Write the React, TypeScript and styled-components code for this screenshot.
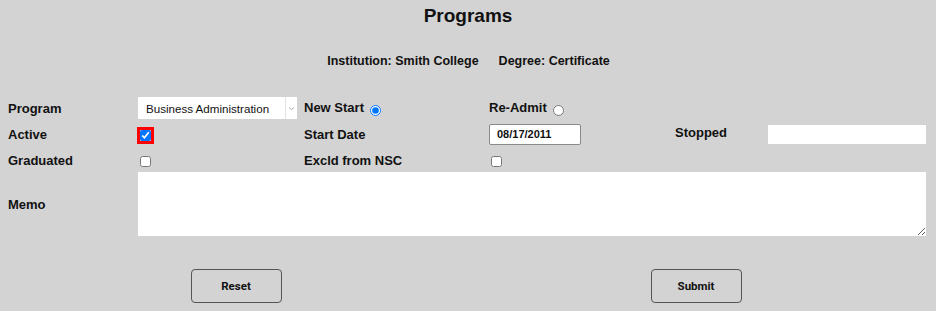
import React from 'react';
import styled, { createGlobalStyle } from 'styled-components';

const GlobalStyle = createGlobalStyle`
  html, body {
    margin: 0;
    padding: 0;
    background: #d3d3d3;
  }
  body {
    font-family: "Liberation Sans", Arial, sans-serif;
    color: #111;
  }
`;

const Page = styled.div`
  width: 936px;
  height: 311px;
  box-sizing: border-box;
  padding: 4px 10px 0 8px;
  background: #d3d3d3;
`;

const Title = styled.h1`
  margin: 0;
  text-align: center;
  font-size: 19px;
  line-height: 24px;
  font-weight: 700;
  padding-left: 2px;
`;

const SubTitle = styled.div`
  margin-top: 25px;
  display: flex;
  justify-content: center;
  gap: 20px;
  font-size: 12.5px;
  line-height: 16px;
  font-weight: 700;
  padding-left: 3px;
`;

const FormGrid = styled.div`
  margin-top: 28px;
  display: grid;
  grid-template-columns: 130px 166px 185px 186px 93px 158px;
  grid-template-rows: 22px 28px 22px 64px;
  row-gap: 1px;
  align-items: center;
`;

const Label = styled.label<{ $raise?: number }>`
  font-size: 13px;
  font-weight: 700;
  white-space: nowrap;
  position: relative;
  top: ${(p) => (p.$raise ? -p.$raise : 0)}px;
`;

const SelectBox = styled.div`
  display: flex;
  width: 159px;
  height: 22px;
  background: #fff;
`;

const NativeSelect = styled.select`
  appearance: none;
  flex: 1;
  min-width: 0;
  border: none;
  outline: none;
  background: transparent;
  padding: 0 0 0 8px;
  margin: 0;
  font-family: "Liberation Sans", Arial, sans-serif;
  font-size: 11.6px;
  color: #111;
`;

const SelectArrow = styled.div`
  width: 11px;
  border-left: 1px solid #e2e2e2;
  display: flex;
  align-items: center;
  justify-content: center;
`;

const Radio = styled.input.attrs({ type: 'radio' })`
  width: 11px;
  height: 11px;
  margin: 0 0 0 6px;
  vertical-align: -4px;
`;

const Check = styled.input.attrs({ type: 'checkbox' })<{ $flagged?: boolean }>`
  width: 11px;
  height: 11px;
  margin: 2px 0 0 2px;
  justify-self: start;
  outline: ${(p) => (p.$flagged ? '3px solid #ff0000' : 'none')};
`;

const DateInput = styled.input`
  box-sizing: border-box;
  width: 92px;
  height: 21px;
  border: 1px solid #8a8a8a;
  border-radius: 2px;
  padding: 0 0 0 7px;
  background: #fff;
  font-family: "Liberation Sans", Arial, sans-serif;
  font-size: 11px;
  font-weight: 700;
  color: #111;
  outline: none;
`;

const PlainInput = styled.input`
  box-sizing: border-box;
  width: 158px;
  height: 19px;
  border: none;
  padding: 0 4px;
  background: #fff;
  outline: none;
`;

const Memo = styled.textarea`
  grid-column: 2 / 7;
  box-sizing: border-box;
  width: 100%;
  height: 64px;
  border: none;
  margin: 0;
  background: #fff;
  outline: none;
  resize: both;
  font-family: "Liberation Sans", Arial, sans-serif;
`;

const ButtonRow = styled.div`
  margin-top: 33px;
  margin-left: -2px;
  display: grid;
  grid-template-columns: 460px 460px;
  justify-items: center;
`;

const Button = styled.button`
  width: 91px;
  height: 34px;
  border: 1px solid #555;
  border-radius: 4px;
  background: transparent;
  font-family: Roboto, "Liberation Sans", Arial, sans-serif;
  font-size: 11.5px;
  font-weight: 700;
  color: #111;
  cursor: pointer;
`;

const Chevron = () => (
  <svg width="7" height="5" viewBox="0 0 7 5">
    <path d="M1 1.5 L3.5 3.5 L6 1.5" fill="none" stroke="#aaa" strokeWidth="1" />
  </svg>
);

const App: React.FC = () => {
  return (
    <>
      <GlobalStyle />
      <Page>
        <Title>Programs</Title>
        <SubTitle>
          <span>Institution: Smith College</span>
          <span>Degree: Certificate</span>
        </SubTitle>

        <FormGrid>
          <Label>Program</Label>
          <SelectBox>
            <NativeSelect defaultValue="ba">
              <option value="ba">Business Administration</option>
            </NativeSelect>
            <SelectArrow>
              <Chevron />
            </SelectArrow>
          </SelectBox>
          <Label>
            New Start
            <Radio name="admit" defaultChecked />
          </Label>
          <Label>
            Re-Admit
            <Radio name="admit" />
          </Label>
          <span />
          <span />

          <Label>Active</Label>
          <Check $flagged defaultChecked />
          <Label>Start Date</Label>
          <DateInput defaultValue="08/17/2011" />
          <Label $raise={2}>Stopped</Label>
          <PlainInput />

          <Label>Graduated</Label>
          <Check />
          <Label>Excld from NSC</Label>
          <Check />
          <span />
          <span />

          <Label>Memo</Label>
          <Memo />
        </FormGrid>

        <ButtonRow>
          <Button type="reset">Reset</Button>
          <Button type="submit">Submit</Button>
        </ButtonRow>
      </Page>
    </>
  );
};

export default App;
